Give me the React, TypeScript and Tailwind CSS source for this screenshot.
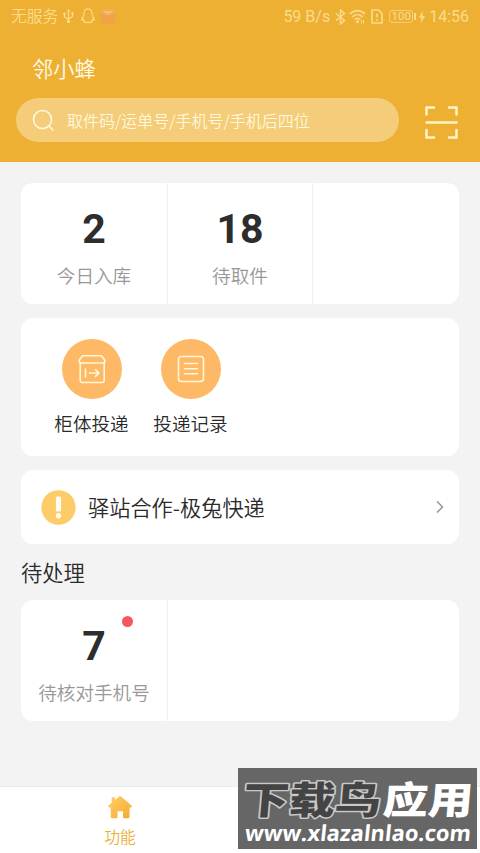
import type { ReactNode } from "react";

function StatusBar() {
  return (
    <div className="flex h-8 items-center justify-between pr-[11px] pl-[11px] text-[#fbdc8c]">
      <div className="flex items-center">
        <span className="text-[15.8px] leading-8 font-[350]">无服务</span>
        <svg className="ml-[5px] h-4 w-[11px]" viewBox="0 0 11 16" fill="none" stroke="currentColor" strokeWidth="1.3">
          <path d="M5.5 2v11M1.5 6v3l4 2.5M9.5 5.5v3l-4 2.5" />
          <path d="M3.7 3.5 5.5 1l1.8 2.5z" fill="currentColor" stroke="none" />
          <circle cx="5.5" cy="13.6" r="1.7" fill="currentColor" stroke="none" />
          <circle cx="1.5" cy="5.8" r="1.2" fill="currentColor" stroke="none" />
          <path d="M8.4 4.2h2.2v2.2H8.4z" fill="currentColor" stroke="none" />
        </svg>
        <svg className="ml-[7px] h-4 w-[14px]" viewBox="0 0 14 16" fill="none" stroke="currentColor" strokeWidth="1.1">
          <path d="M7 .9C4.4.9 3 2.7 3 5.2c0 .7-.1 1.3-.5 2C1.5 8.700.8 10.2.9 11.800c.1.7.7.5 1.6-.7.2 1 .6 1.5 1.2 2.100-.8.4-.8 1.500.4 1.600 1.100.1 2-.2 2.900-.8.9.6 1.800.9 2.900.8 1.200-.1 1.200-1.200.4-1.600.6-.6 1-1.100 1.200-2.100.9 1.200 1.500 1.400 1.600.7.1-1.600-.6-3.100-1.600-4.600-.4-.7-.5-1.300-.5-2C11 2.700 9.600.9 7 .9z" />
        </svg>
        <svg className="ml-[5px] h-4 w-4" viewBox="0 0 16 16" fill="none">
          <rect x="0.5" y="1" width="15" height="15" rx="3.5" fill="#f3a347" />
          <path d="M1 5.500C1 2.500 2 1 4 1h8c2 0 3 1.500 3 4.500-4 1.500-10 1.500-14 0z" fill="#f5ad55" />
          <path d="M4 4h8M6.500 6h3" stroke="#fbcb82" />
        </svg>
      </div>
      <div className="flex items-center pt-px font-['Roboto','Liberation_Sans',sans-serif] text-[16px] leading-8">
        <span>59 B/s</span>
        <svg className="ml-[5px] h-4 w-[11px]" viewBox="0 0 11 16" fill="none" stroke="currentColor" strokeWidth="1.5">
          <path d="M1 4.500 9.500 11.500 5.500 15V1l4 3.500L1 11.500" />
        </svg>
        <svg className="ml-[3px] h-[15px] w-[17px]" viewBox="0 0 17 15" fill="none" stroke="currentColor" strokeWidth="1.7">
          <path d="M1 5C5.200.6 11.800.6 16 5M3.400 7.900c3-2.900 7.200-2.900 10.200 0M5.800 10.600c1.600-1.500 3.800-1.500 5.400 0" />
          <circle cx="8.500" cy="12.800" r="1.500" fill="currentColor" stroke="none" />
          <path d="M12.500 11v3.500M14.500 11v3.500" strokeWidth="1" />
        </svg>
        <svg className="ml-[5px] h-[15px] w-3" viewBox="0 0 12 15" fill="none" stroke="currentColor" strokeWidth="1.6">
          <path d="M1 1h6.500L11 4.500V14H1zM6 4.500v4M6 10v1.700" />
        </svg>
        <span className="ml-[6px] flex h-[13px] w-[24px] items-center justify-center rounded-[3px] border border-[#fbdc8c]/70 text-[11.5px] leading-none">
          100
        </span>
        <span className="ml-px h-[7px] w-[2px] bg-[#fbdc8c]" />
        <svg className="ml-[3px] h-3 w-[6px]" viewBox="0 0 6 12" fill="currentColor">
          <path d="M3.600 0 0 6.700h2.400L1.900 12 6 4.900H3.500z" />
        </svg>
        <span className="ml-[4px]">14:56</span>
      </div>
    </div>
  );
}

function Header() {
  return (
    <header className="h-[162px] shrink-0 bg-[#eeb033]">
      <StatusBar />
      <h1 className="mt-[21px] pl-8 text-[21.3px] leading-[30px] font-[350] text-[#fffbe6]">邻小蜂</h1>
      <div className="mt-[15px] flex items-center pl-4">
        <div className="flex h-11 w-[383px] items-center rounded-full bg-[#f4cc7a] pl-4 text-[#fff8da]">
          <svg className="h-[23px] w-[23px]" viewBox="0 0 23 23" fill="none" stroke="currentColor" strokeWidth="1.6" strokeLinecap="round">
            <circle cx="10.5" cy="10.5" r="9" />
            <path d="m17 17 4 4" />
          </svg>
          <span className="ml-[12px] text-[16px] font-[350] whitespace-nowrap">取件码/运单号/手机号/手机后四位</span>
        </div>
        <svg className="mt-1 ml-[26px] h-[33px] w-[33px]" viewBox="0 0 33 33" fill="none" stroke="#fff5c8" strokeWidth="2.5" strokeLinecap="round" strokeLinejoin="round">
          <path d="M1.500 8.500V1.500h7.500M24 1.500h7.500v7M1.500 24v7.500H9M24 31.500h7.500V24M1.500 16.500h30" />
        </svg>
      </div>
    </header>
  );
}

function Stat({ value, label, dot }: { value: number; label: string; dot?: boolean }) {
  return (
    <div className="relative flex w-[145px] flex-col items-center border-r border-[#efefef] pt-[22px] first:w-[147px]">
      <span className="font-['Roboto','Liberation_Sans',sans-serif] text-[41px] leading-[48px] font-bold text-[#2d2d2d]">
        {value}
      </span>
      <span className="mt-[8px] text-[18.6px] leading-7 font-[350] text-[#989898]">{label}</span>
      {dot && <span className="absolute top-[16px] right-[34px] h-[11px] w-[11px] rounded-full bg-[#f4585e]" />}
    </div>
  );
}

function Action({ label, children }: { label: string; children: ReactNode }) {
  return (
    <div className="flex w-[99px] flex-col items-center">
      <div className="flex h-[60px] w-[60px] items-center justify-center rounded-full bg-[#feb967]">{children}</div>
      <span className="mt-[10px] text-[18.6px] leading-7 font-[350] text-[#2a2a2a]">{label}</span>
    </div>
  );
}

function Watermark() {
  return (
    <div className="absolute top-[768px] left-[238px] h-[81px] w-[239px] overflow-hidden bg-[#666] text-white">
      <svg className="h-full w-full" viewBox="0 0 239 81">
        <g fontFamily="'Noto Sans CJK SC', sans-serif" fontSize="38" fontWeight="900" paintOrder="stroke" strokeLinejoin="round" transform="translate(4 0) skewX(-5)">
          <text x="4" y="46" textLength="138" lengthAdjust="spacingAndGlyphs" fill="#444" stroke="#c9c9c9" strokeWidth="3">
            下载鸟
          </text>
          <text x="144" y="46" textLength="90" lengthAdjust="spacingAndGlyphs" fill="#fff">
            应用
          </text>
        </g>
        <text x="7" y="73.500" textLength="226" lengthAdjust="spacingAndGlyphs" fill="#fff" fontFamily="'Open Sans', sans-serif" fontSize="22" fontWeight="700" transform="translate(7 0) skewX(-6)">
          www.xlazalnlao.com
        </text>
      </svg>
    </div>
  );
}

export default function App() {
  return (
    <div className="relative flex h-[853px] w-[480px] flex-col overflow-hidden bg-[#f3f3f3] font-['Noto_Sans_CJK_SC',sans-serif]">
      <Header />

      <main className="flex flex-1 flex-col px-[21px] pt-[21px]">
        <section className="flex h-[121px] rounded-xl bg-white">
          <Stat value={2} label="今日入库" />
          <Stat value={18} label="待取件" />
        </section>

        <section className="mt-[14px] flex h-[138px] rounded-xl bg-white pt-[21px] pl-[21px]">
          <Action label="柜体投递">
            <svg className="h-[30px] w-[30px]" viewBox="0 0 30 30" fill="none" stroke="#fff7d8" strokeWidth="1.6" strokeLinecap="round" strokeLinejoin="round">
              <path d="M5.500 1.700h19L28 6.500c0 1.500-1 2.500-2.300 2.500H4.300C3 9 2 8 2 6.500z" />
              <path d="M3.200 9v17.500a2 2 0 0 0 2 2h20a2 2 0 0 0 2-2V9M8.500 15v8M12.500 19h9.500M18.500 15.700 22 19l-3.500 3.300" />
            </svg>
          </Action>
          <Action label="投递记录">
            <svg className="h-[28px] w-[28px]" viewBox="0 0 28 28" fill="none" stroke="#fff7d8" strokeWidth="1.6" strokeLinecap="round">
              <rect x="1.500" y="1.500" width="25" height="25" rx="3" />
              <path d="M7.500 8.500h13M7.500 13.700h13M7.500 18.700h13" />
            </svg>
          </Action>
        </section>

        <section className="mt-[14px] flex h-[74px] items-center rounded-xl bg-white pr-[15px] pl-5">
          <svg className="h-[35px] w-[35px]" viewBox="0 0 35 35">
            <circle cx="17.500" cy="17.500" r="17.200" fill="#fecb69" />
            <rect x="14.900" y="6.500" width="5.200" height="15" rx="1.500" fill="#fffdf2" />
            <circle cx="17.500" cy="25.700" r="2.700" fill="#fffdf2" />
          </svg>
          <span className="-mt-px ml-3 text-[21.2px] leading-8 font-[350] text-[#2a2a2a]">驿站合作-极兔快递</span>
          <svg className="ml-auto h-3 w-2" viewBox="0 0 8 12" fill="none" stroke="#9b9b9b" strokeWidth="1.6">
            <path d="m1 .5 5.500 5.500L1 11.500" />
          </svg>
        </section>

        <h2 className="mt-[12px] text-[21.3px] leading-8 font-[350] text-[#2a2a2a]">待处理</h2>

        <section className="mt-[12px] flex h-[121px] rounded-xl bg-white">
          <Stat value={7} label="待核对手机号" dot />
        </section>
      </main>

      <nav className="flex h-[67px] shrink-0 border-t border-[#ececec] bg-white">
        <div className="flex w-1/2 flex-col items-center pt-[8px] text-[#e9b13b]">
          <svg className="h-6 w-6" viewBox="0 0 24 24">
            <defs>
              <linearGradient id="home" x1="0" y1="0" x2="1" y2="1">
                <stop offset="0" stopColor="#ffd06a" />
                <stop offset="1" stopColor="#f4a92e" />
              </linearGradient>
            </defs>
            <path d="M12 .8 16.500 4.500 23.500 10.500c.8.900.3 1.900-.8 1.900H21.500V22c0 .9-.5 1.300-1.300 1.300H15v-7H9.500v7H4c-.9 0-1.300-.5-1.300-1.300v-9.600H1.300c-1.100 0-1.500-1-.7-1.900L3.700 7.800V3.200c0-.6.300-1 1-1h1.500c.6 0 1 .4 1 1v1.700z" fill="url(#home)" />
          </svg>
          <span className="mt-[6px] text-[15.8px] leading-6 font-[350]">功能</span>
        </div>
      </nav>

      <Watermark />
    </div>
  );
}
